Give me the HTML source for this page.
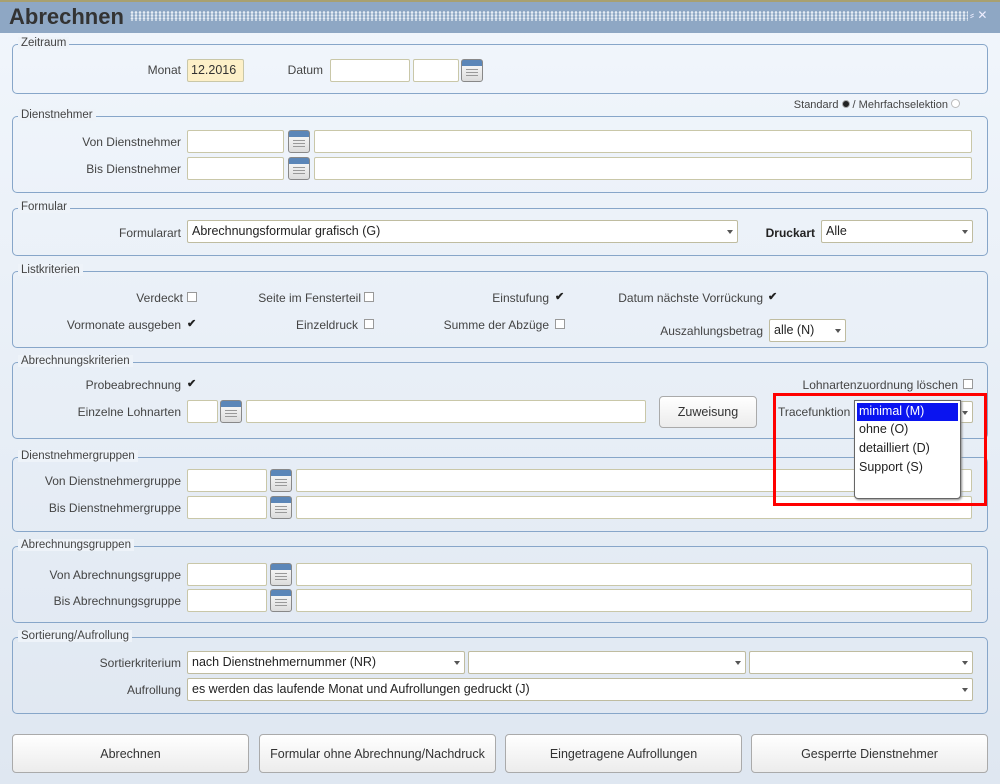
<!DOCTYPE html>
<html><head><meta charset="utf-8"><style>
*{box-sizing:border-box;margin:0;padding:0}
body{width:1000px;height:784px;position:relative;overflow:hidden;font-family:"Liberation Sans",sans-serif;font-size:12px;color:#333;background:linear-gradient(#f1f6fc,#dfe7f1)}
.a{position:absolute}
.tb{left:0;top:0;width:1000px;height:33px;background:#8ea7c4;border-top:2px solid #a8a070}
.tt{left:9px;top:4px;font-size:22px;font-weight:bold;color:#333}
.dots{left:130px;top:11px;width:838px;height:10px;background-image:radial-gradient(circle,#e6edf5 1.1px,transparent 1.5px);background-size:4px 3px}
.fs{border:1px solid #87a6c9;border-radius:5px;left:12px;width:976px}
.lg{background:#eef3f9;padding:0 3px;color:#444;font-size:11.5px;top:-8px;left:5px;font-weight:normal}
.l{color:#444;text-align:right;font-size:12px}
.in{background:#fff;border:1px solid #c9c7a8;height:23px;border-radius:2px}
.sel{background:#fff;border:1px solid #bfbca0;height:23px;border-radius:2px;padding:3px 4px;font-size:12.5px;color:#222}
.sel:after{content:"";position:absolute;right:4px;top:9px;border:3px solid transparent;border-top:4px solid #555}
.cal{width:22px;height:23px;border:1px solid #888;border-radius:3px;background:linear-gradient(#5b86b8 0,#5b86b8 6px,#f4f4f4 6px,#dcdcdc)}
.cal:after{content:"";position:absolute;left:4px;top:9px;width:12px;height:8px;background:repeating-linear-gradient(#999 0 1px,transparent 1px 3px)}
.cb{width:10px;height:10px;border:1px solid #999;background:#fff}
.ck{font-size:11px;line-height:8px;color:#222;font-weight:bold}
.btn{top:734px;height:39px;border:1px solid #aaa;border-radius:4px;background:linear-gradient(#fff,#ececec);text-align:center;line-height:38px;font-size:12.5px;color:#333}
</style></head><body>
<div class="a tb"></div><div class="a tt">Abrechnen</div><div class="a dots"></div>
<div class="a" style="left:970px;top:8px;color:#eef;font-size:12px">⸗ ✕</div>

<div class="a fs" style="top:44px;height:50px"><div class="a lg">Zeitraum</div></div>
<div class="a l" style="right:819px;top:63px">Monat</div>
<div class="a in" style="left:187px;top:59px;width:57px;background:#fdf0c8;padding:3px;font-size:12.5px">12.2016</div>
<div class="a l" style="right:677px;top:63px">Datum</div>
<div class="a in" style="left:330px;top:59px;width:80px"></div>
<div class="a in" style="left:413px;top:59px;width:46px"></div>
<div class="a cal" style="left:461px;top:59px"></div>

<div class="a" style="right:40px;top:99px;font-size:11px;color:#444">Standard <span style="display:inline-block;width:8px;height:8px;border-radius:50%;background:#222;border:1px solid #aaa"></span> / Mehrfachselektion <span style="display:inline-block;width:9px;height:9px;border-radius:50%;border:1px solid #bbb;background:#fff"></span></div>

<div class="a fs" style="top:116px;height:77px"><div class="a lg">Dienstnehmer</div></div>
<div class="a l" style="right:819px;top:135px">Von Dienstnehmer</div>
<div class="a in" style="left:187px;top:130px;width:97px"></div><div class="a cal" style="left:288px;top:130px"></div><div class="a in" style="left:314px;top:130px;width:658px"></div>
<div class="a l" style="right:819px;top:162px">Bis Dienstnehmer</div>
<div class="a in" style="left:187px;top:157px;width:97px"></div><div class="a cal" style="left:288px;top:157px"></div><div class="a in" style="left:314px;top:157px;width:658px"></div>

<div class="a fs" style="top:208px;height:48px"><div class="a lg">Formular</div></div>
<div class="a l" style="right:819px;top:226px">Formularart</div>
<div class="a sel" style="left:187px;top:220px;width:551px">Abrechnungsformular grafisch (G)</div>
<div class="a l" style="right:185px;top:226px;font-weight:bold;color:#222">Druckart</div>
<div class="a sel" style="left:821px;top:220px;width:152px">Alle</div>

<div class="a fs" style="top:271px;height:77px"><div class="a lg">Listkriterien</div></div>
<div class="a l" style="right:817px;top:291px">Verdeckt</div><div class="a cb" style="left:187px;top:292px"></div>
<div class="a l" style="right:639px;top:291px">Seite im Fensterteil</div><div class="a cb" style="left:364px;top:292px"></div>
<div class="a l" style="right:451px;top:291px">Einstufung</div><div class="a ck" style="left:555px;top:293px">✔</div>
<div class="a l" style="right:237px;top:291px">Datum nächste Vorrückung</div><div class="a ck" style="left:768px;top:293px">✔</div>
<div class="a l" style="right:819px;top:318px">Vormonate ausgeben</div><div class="a ck" style="left:187px;top:320px">✔</div>
<div class="a l" style="right:642px;top:318px">Einzeldruck</div><div class="a cb" style="left:364px;top:319px"></div>
<div class="a l" style="right:451px;top:318px">Summe der Abzüge</div><div class="a cb" style="left:555px;top:319px"></div>
<div class="a l" style="right:237px;top:324px">Auszahlungsbetrag</div>
<div class="a sel" style="left:769px;top:319px;width:77px">alle (N)</div>

<div class="a fs" style="top:362px;height:77px"><div class="a lg">Abrechnungskriterien</div></div>
<div class="a l" style="right:819px;top:378px">Probeabrechnung</div><div class="a ck" style="left:187px;top:380px">✔</div>
<div class="a l" style="right:42px;top:378px">Lohnartenzuordnung löschen</div><div class="a cb" style="left:963px;top:379px"></div>
<div class="a l" style="right:819px;top:405px">Einzelne Lohnarten</div>
<div class="a in" style="left:187px;top:400px;width:31px"></div><div class="a cal" style="left:220px;top:400px"></div><div class="a in" style="left:246px;top:400px;width:400px"></div>
<div class="a btn" style="left:659px;top:396px;width:98px;height:32px;line-height:31px">Zuweisung</div>
<div class="a l" style="left:778px;top:405px">Tracefunktion</div>
<div class="a sel" style="left:854px;top:401px;width:119px;height:22px"></div>

<div class="a fs" style="top:457px;height:75px"><div class="a lg">Dienstnehmergruppen</div></div>
<div class="a l" style="right:819px;top:474px">Von Dienstnehmergruppe</div>
<div class="a in" style="left:187px;top:469px;width:80px"></div><div class="a cal" style="left:270px;top:469px"></div><div class="a in" style="left:296px;top:469px;width:676px"></div>
<div class="a l" style="right:819px;top:501px">Bis Dienstnehmergruppe</div>
<div class="a in" style="left:187px;top:496px;width:80px"></div><div class="a cal" style="left:270px;top:496px"></div><div class="a in" style="left:296px;top:496px;width:676px"></div>

<div class="a fs" style="top:546px;height:77px"><div class="a lg">Abrechnungsgruppen</div></div>
<div class="a l" style="right:819px;top:568px">Von Abrechnungsgruppe</div>
<div class="a in" style="left:187px;top:563px;width:80px"></div><div class="a cal" style="left:270px;top:563px"></div><div class="a in" style="left:296px;top:563px;width:676px"></div>
<div class="a l" style="right:819px;top:594px">Bis Abrechnungsgruppe</div>
<div class="a in" style="left:187px;top:589px;width:80px"></div><div class="a cal" style="left:270px;top:589px"></div><div class="a in" style="left:296px;top:589px;width:676px"></div>

<div class="a fs" style="top:637px;height:77px"><div class="a lg">Sortierung/Aufrollung</div></div>
<div class="a l" style="right:819px;top:656px">Sortierkriterium</div>
<div class="a sel" style="left:187px;top:651px;width:278px">nach Dienstnehmernummer (NR)</div>
<div class="a sel" style="left:468px;top:651px;width:278px"></div>
<div class="a sel" style="left:749px;top:651px;width:224px"></div>
<div class="a l" style="right:819px;top:683px">Aufrollung</div>
<div class="a sel" style="left:187px;top:678px;width:786px">es werden das laufende Monat und Aufrollungen gedruckt (J)</div>

<div class="a btn" style="left:12px;width:237px">Abrechnen</div>
<div class="a btn" style="left:259px;width:237px">Formular ohne Abrechnung/Nachdruck</div>
<div class="a btn" style="left:505px;width:237px">Eingetragene Aufrollungen</div>
<div class="a btn" style="left:751px;width:237px">Gesperrte Dienstnehmer</div>

<div class="a" style="left:854px;top:400px;width:107px;height:99px;background:#fff;border:1px solid #666;border-radius:0 0 4px 4px;box-shadow:1px 1px 2px #888;font-size:12.5px;color:#222">
<div style="background:#0a14f0;color:#fff;margin:2px 2px 0;padding:1px 2px;height:18px">minimal (M)</div>
<div style="padding:1px 4px;height:19px">ohne (O)</div>
<div style="padding:1px 4px;height:19px">detailliert (D)</div>
<div style="padding:1px 4px;height:19px">Support (S)</div>
</div>
<div class="a" style="left:773px;top:393px;width:214px;height:113px;border:3px solid #f00"></div>
</body></html>
